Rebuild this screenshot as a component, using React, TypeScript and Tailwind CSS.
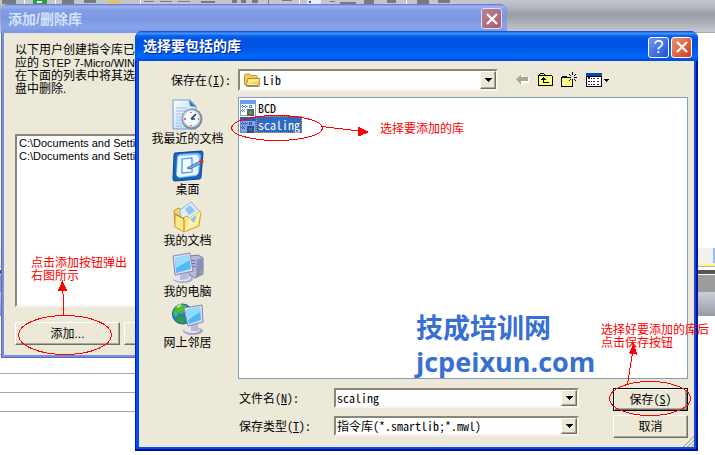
import React, { useState } from 'react';

const RAISED = 'border border-t-white border-l-white border-r-[#716f64] border-b-[#716f64] shadow-[inset_-1px_-1px_0_#aca899]';
const SUNKEN = 'border-2 border-t-[#8a8779] border-l-[#8a8779] border-r-[#f6f4ec] border-b-[#f6f4ec] bg-white';

const DownArrow = () => (
  <svg width="7" height="4" viewBox="0 0 7 4" shapeRendering="crispEdges">
    <path d="M0 0h7v1H6v1H5v1H4v1H3V3H2V2H1V1H0z" fill="#000" />
  </svg>
);

const RecentIcon = () => (
  <svg width="32" height="32" viewBox="0 0 32 32">
    <defs>
      <linearGradient id="paper" x1="0" y1="0" x2="1" y2="1">
        <stop offset="0" stopColor="#fff" />
        <stop offset="1" stopColor="#a9cdf8" />
      </linearGradient>
    </defs>
    <path d="M1 1h17l6 6v23H1z" fill="url(#paper)" stroke="#6f9fdb" />
    <path d="M17 1l7 7-6-1z" fill="#2878c4" />
    <path d="M4 9h11M4 12h15M4 15h9M4 18h6M4 21h5M4 24h5M4 27h6" stroke="#9dc2ee" />
    <circle cx="20" cy="20" r="10.5" fill="#7e8da0" />
    <circle cx="19.500" cy="19.500" r="9" fill="#c8d3df" />
    <circle cx="19.500" cy="19.500" r="7.500" fill="#f4fbff" />
    <path d="M19 20l5-5M19 20l4 0" stroke="#124a7b" strokeWidth="1.700" />
    <path d="M19 13v1M19 26v1M12 20h2M26 20h1" stroke="#ef6844" strokeWidth="2" />
  </svg>
);

const DesktopIcon = () => (
  <svg width="32" height="32" viewBox="0 0 32 32">
    <path d="M3 3l26-2q2 0 2 2l-2 24q0 2-2 2L3 31q-2 0-2-2L2 5q0-2 1-2z" fill="#1764bd" stroke="#0c4793" />
    <path d="M5 6l3-2 18-1 3 2-2 18-3 3-17 2-3-3z" fill="#7cc1fb" />
    <path d="M8 6l15-1q4 0 4 4l-1 13q0 3-3 3L8 27q-4 0-3-4L6 9q0-3 2-3z" fill="#eef8ff" />
    <path d="M10 9l10-1v14l-10 1z" fill="#f4faff" stroke="#3c95e8" strokeWidth="1.200" />
    <path d="M15 18l13-7 2 2-12 6z" fill="#74b8ee" stroke="#174e88" strokeWidth=".7" />
    <circle cx="29.500" cy="11.500" r="2" fill="#cf3426" />
  </svg>
);

const DocumentsIcon = () => (
  <svg width="32" height="32" viewBox="0 0 32 32">
    <path d="M2 10l4-3 5 2 3 3v16l-11-4z" fill="#f8d768" stroke="#c3922d" />
    <path d="M8 9L19 1l9 10-9 14-10-2z" fill="#dceeff" stroke="#86b9e7" />
    <path d="M13 8l5-4 5 6-6 4z" fill="#91c4f5" />
    <path d="M3 13l8 4 4-2 2 2 12-7-2 15-15 6-9-5z" fill="#ffe785" stroke="#d49b2c" />
    <path d="M17 17l12-7-4 13-12 7z" fill="#fff1ac" />
    <path d="M18 18l7-4-3 8z" fill="#8ac3f4" />
    <path d="M3 13l9 5v12" fill="none" stroke="#b07b20" />
  </svg>
);

const ComputerIcon = () => (
  <svg width="32" height="32" viewBox="0 0 32 32">
    <path d="M18 4l8-1 5 3v16l-8 4-6-3z" fill="#b9badb" stroke="#7678a4" />
    <path d="M25 7l6-1v16l-7 3z" fill="#8c8eb9" />
    <path d="M19 8l5 1M19 11l5 1M19 14l5 1" stroke="#666a9f" />
    <path d="M28 19h2v2h-2z" fill="#72d348" />
    <ellipse cx="11" cy="27" rx="10" ry="4" fill="#a5a6c7" />
    <ellipse cx="10" cy="26" rx="9" ry="3.500" fill="#e4e5f3" />
    <path d="M8 19h8l1 8-9 1z" fill="#b9bad8" />
    <path d="M1 4l17-3 3 18-18 4z" fill="#dedff0" stroke="#8587af" />
    <path d="M3 6l14-3 2 14-15 4z" fill="#53b9f6" />
    <path d="M3 6l14-3 1 5L4 16z" fill="#a9e5ff" opacity=".8" />
  </svg>
);

const NetworkIcon = () => (
  <svg width="32" height="32" viewBox="0 0 32 32">
    <circle cx="10.500" cy="11" r="10" fill="#1681df" stroke="#075aa9" />
    <path d="M3 5l4-4 6 1 3 3-4 2-1 4-4-1-3 4-3-3z" fill="#55bb38" />
    <path d="M6 13l5 1 3 3-5 4-5-4z" fill="#3a9d29" />
    <path d="M5 4l4-2" stroke="#c6f389" strokeWidth="2" />
    <g transform="translate(11 2)">
      <ellipse cx="10" cy="26" rx="10" ry="4" fill="#a5a6c7" />
      <ellipse cx="9" cy="25" rx="8" ry="3" fill="#e4e5f3" />
      <path d="M8 18h7l1 8H8z" fill="#b9bad8" />
      <path d="M1 3l18-3 1 17-15 4z" fill="#dedff0" stroke="#8587af" />
      <path d="M3 5l14-3 1 13-12 4z" fill="#50b8f6" />
      <path d="M3 5l14-3v5L5 15z" fill="#9fe2ff" opacity=".8" />
    </g>
  </svg>
);

const LibraryIcon: React.FC<{ selected: boolean }> = ({ selected }) => (
  <svg width="16" height="16" viewBox="0 0 16 16" shapeRendering="crispEdges">
    <path d="M0 0h16v16H0z" fill={selected ? '#5f86cc' : '#8fa3c4'} />
    <path d="M0 0h16v4H0z" fill={selected ? '#2f5fb4' : '#6f9ce6'} />
    <path d="M1 4h14v11H1z" fill={selected ? '#84a8e4' : '#fff'} />
    <path
      d="M1 6h1v1H1zM2 5h1v1H2zM2 7h1v1H2zM3 6h2v1H3zM5 5h1v1H5zM5 7h1v1H5zM6 6h2v1H6zM9 5h3v1H9zM9 7h3v1H9zM9 6h1v1H9zM11 6h1v1h-1zM1 10h1v1H1zM2 9h1v1H2zM2 11h1v1H2zM3 10h1v1H3zM4 9h1v1H4zM4 11h1v1H4z"
      fill={selected ? '#2b5cb5' : '#5c8edc'}
    />
    <path d="M7 9h7v7H7z" fill={selected ? '#2d4f80' : '#5b6b62'} />
    <path d="M9 11h3v3H9z" fill={selected ? '#47797d' : '#5f9a56'} />
  </svg>
);

const FolderIcon = () => (
  <svg width="17" height="14" viewBox="0 0 17 14">
    <path d="M2 13h13l1-7v6l-1 2H3z" fill="#8d8a78" />
    <path d="M.5 11V3l1-2h4l2 1.500h5l1 1.500v7l-1 1.500H1.500z" fill="#f0cb52" stroke="#c09a2c" />
    <path d="M2 12.500l2-7h12l-2 7z" fill="#ffec97" stroke="#b78b1d" />
    <path d="M4 11h9l1-3z" fill="#f2cd54" />
  </svg>
);

const BackIcon = () => (
  <svg width="14" height="12" viewBox="0 0 14 12" shapeRendering="crispEdges">
    <path d="M1 6l6-5v3h6v5H7v3z" fill="#fff" />
    <path d="M0 5l5-5v3h7v4H5v4z" fill="#aca899" />
  </svg>
);

const UpIcon = () => (
  <svg width="15" height="14" viewBox="0 0 15 14" shapeRendering="crispEdges">
    <path d="M0 2h1V1h1V0h4v1h1v1h7v1h1v10H0z" fill="#000" />
    <path d="M1 3h13v9H1zM2 1h4v1H2z" fill="#ffff80" />
    <path d="M5 4h1v1h1v1h1v1H6v2h5v1H5V7H3V6h1V5h1z" fill="#000" />
  </svg>
);

const NewFolderIcon = () => (
  <svg width="17" height="16" viewBox="0 0 17 16" shapeRendering="crispEdges">
    <path d="M0 5h1V4h5v1h6v10H0z" fill="#000" />
    <path d="M1 6h10v8H1zM2 5h3v0z" fill="#ffff80" />
    <path d="M8 3h6v5H8z" fill="#ece9d8" />
    <path d="M11 0h1v3h-1zM11 7h1v3h-1zM7 5h3v1H7zM13 5h3v1h-3zM8 2h1v1H8zM9 3h1v1H9zM13 3h1v1h-1zM14 2h1v1h-1zM9 7h1v1H9zM13 7h1v1h-1zM14 8h1v1h-1zM8 8h1v1H8z" fill="#000" />
  </svg>
);

const ViewIcon = () => (
  <svg width="16" height="14" viewBox="0 0 16 14" shapeRendering="crispEdges">
    <path d="M0 0h16v14H0z" fill="#000" />
    <path d="M1 4h14v9H1z" fill="#fff" />
    <path d="M0 0h16v3H0z" fill="#0a48a5" />
    <path d="M2 5h2v1H2zM7 5h2v1H7zM11 5h2v1h-2zM2 8h2v1H2zM7 8h2v1H7zM11 8h2v1h-2zM2 11h2v1H2zM7 11h2v1H7zM11 11h2v1h-2z" fill="#2a2a8c" />
    <path d="M2 4h2v1H2zM5 5h1v1H5zM10 5h0v1zM14 5h0v1zM5 8h1v1H5zM5 11h1v1H5z" fill="#000" />
  </svg>
);

const CloseGlyph = () => (
  <svg width="12" height="12" viewBox="0 0 12 12">
    <path d="M1 1l10 10M11 1L1 11" stroke="#fff" strokeWidth="2.200" />
  </svg>
);

const places = [
  { name: '我最近的文档', icon: RecentIcon },
  { name: '桌面', icon: DesktopIcon },
  { name: '我的文档', icon: DocumentsIcon },
  { name: '我的电脑', icon: ComputerIcon },
  { name: '网上邻居', icon: NetworkIcon },
];

const libraries = ['BCD', 'scaling'];

const Backdrop = () => (
  <div className="absolute inset-0 bg-white">
    <div className="h-[33px] bg-[linear-gradient(#c3c7cf,#b0b4bc_25%,#979ca5_45%,#a7abb4_65%,#c6c8cf)] border-b border-[#aaa]">
      <svg width="490" height="4" viewBox="0 0 490 4" shapeRendering="crispEdges">
        <path d="M0 0h490v4H0z" fill="#c3c6cb" />
        <path d="M2 0h14v4H2zM62 0h12v4H62zM84 0h12v3H84zM144 1h10v1h-10zM160 1h12v1h-12zM178 1h12v1h-12zM201 1h14v2h-14zM232 0h5v3h-5zM241 0h5v3h-5zM252 0h6v3h-6zM268 0h1v4h-1zM282 0h10v1h-10zM330 1h5v1h-5zM340 2h16v2h-16zM364 0h10v4h-10zM387 0h9v3h-9zM417 0h12v4h-12zM438 0h12v3h-12z" fill="#777b80" />
        <path d="M24 0h1v4h-1zM55 0h1v4h-1zM140 0h1v4h-1zM299 0h1v4h-1zM406 0h1v4h-1z" fill="#fff" />
        <path d="M33 0h14v4H33z" fill="#2f9d45" />
        <path d="M37 1h5v2h-5z" fill="#fff" />
        <path d="M107 1h14v3h-14z" fill="#e8bd6c" />
        <path d="M307 0h14v4h-14z" fill="#e5efff" />
        <path d="M309 1h2v2h-2z" fill="#2856a8" />
      </svg>
    </div>
    <div className="mt-[215px] h-4 bg-[#f3f1eb] flex justify-end">
      <div className="w-0.5 h-[15px] bg-[#9fbcf0]" />
    </div>
    <div className="h-[3px] bg-[#fff58a] border-b border-[#b9b9a5]" />
    <div className="mt-[3px] h-1 bg-[#555]" />
    <div className="h-[18px] bg-[#9b9d9b] border-t border-white" />
    <div className="h-6 bg-linear-to-b from-[#cdd0d7] to-[#969ba6]" />
    <div className="mt-[38px] w-1 h-px bg-[#aca899]" />
    <div className="mt-[18px] h-[39px] w-[135px] flex flex-col justify-between">
      <div className="h-px bg-[#aca899]" />
      <div className="h-px bg-[#aca899]" />
      <div className="h-px bg-[#aca899]" />
    </div>
  </div>
);

const LibraryWindow = () => (
  <section className="absolute top-1 left-px right-[208px] rounded-t-lg overflow-hidden bg-[#7a8fe0] pl-[3px] pr-1 pb-[3px] shadow-[inset_0_0_0_1px_#5f69ca]">
    <header className="-ml-[3px] -mr-1 h-[29px] pl-[7px] pr-[5px] flex items-center justify-between bg-[linear-gradient(#6374cf,#9db2f2_8%,#839fe6_20%,#7b96df_50%,#86a3ec_80%,#7d96e3)]">
      <h2 className="text-sm font-bold text-[#d8e2fa]">添加/删除库</h2>
      <button type="button" aria-label="关闭" className="size-[21px] flex items-center justify-center rounded-[3px] border border-[#dbe0fa] bg-linear-to-br from-[#ba818f] to-[#ac5c70]">
        <CloseGlyph />
      </button>
    </header>
    <div className="bg-[#ece9d8] px-[11px] pt-[11px] pb-[10px]">
      <p className="leading-[13px] whitespace-nowrap">
        以下用户创建指令库已<br />
        应的 <span className="text-[11px]">STEP 7-Micro/WIN</span><br />
        在下面的列表中将其选<br />
        盘中删除.
      </p>
      <ul className={`mt-[38px] h-[173px] pl-0.5 pt-px text-[11px] leading-[13px] ${SUNKEN}`}>
        <li>C:\Documents and Settings</li>
        <li>C:\Documents and Settings</li>
      </ul>
      <div className="mt-[15px] flex gap-1">
        <button type="button" className={`w-[105px] h-[23px] bg-[#ece9d8] ${RAISED}`}>添加...</button>
        <button type="button" aria-label="删除" className={`w-[105px] h-[23px] bg-[#ece9d8] ${RAISED}`} />
      </div>
    </div>
  </section>
);

const SaveDialog = () => {
  const [selected, setSelected] = useState('scaling');
  const [fileName, setFileName] = useState('scaling');

  const pick = (name: string) => {
    setSelected(name);
    setFileName(name);
  };

  return (
    <section className="absolute top-[31px] left-[135px] right-[17px] rounded-t-lg overflow-hidden bg-[#0a4bec] px-1 pb-1 shadow-[inset_-2px_-2px_0_#00138c,inset_1px_0_0_#0019cf]">
      <header className="-mx-1 h-[30px] pl-2 pr-[6px] flex items-center bg-[linear-gradient(#0a45c8,#3f97ff_8%,#0a60ee_16%,#0053e1_30%,#0055e5_55%,#0068ff_85%,#0049d4)]">
        <h1 className="flex-1 text-sm font-bold text-white [text-shadow:1px_1px_0_#00248c]">选择要包括的库</h1>
        <div className="flex gap-0.5 pt-0.5">
          <button type="button" aria-label="帮助" className="size-[21px] flex items-center justify-center rounded-[3px] border border-white bg-linear-to-br from-[#6d98f2] to-[#1c4fd8] text-white text-lg leading-none">
            ?
          </button>
          <button type="button" aria-label="关闭" className="size-[21px] flex items-center justify-center rounded-[3px] border border-white bg-linear-to-br from-[#ef8f72] to-[#cf3a12]">
            <CloseGlyph />
          </button>
        </div>
      </header>

      <div className="relative bg-[#ece9d8] pt-2 pb-[9px] pr-[6px] font-['Noto_Sans_Mono_CJK_SC','Noto_Sans_CJK_SC',monospace]">
        <div className="flex items-center">
          <label htmlFor="folder" className="w-[99px] pl-8 shrink-0 whitespace-nowrap">保存在(<u>I</u>):</label>
          <div className={`relative w-[260px] h-[22px] flex items-center ${SUNKEN}`}>
            <span className="absolute left-1 pointer-events-none"><FolderIcon /></span>
            <select id="folder" className="w-full h-full pl-[23px] appearance-none outline-none">
              <option>Lib</option>
            </select>
            <span className={`absolute right-0 inset-y-0 w-4 flex items-center justify-center bg-[#ece9d8] pointer-events-none ${RAISED}`}><DownArrow /></span>
          </div>
          <div className="ml-[18px] flex items-center gap-2">
            <button type="button" aria-label="后退"><BackIcon /></button>
            <button type="button" aria-label="向上一级"><UpIcon /></button>
            <button type="button" aria-label="新建文件夹"><NewFolderIcon /></button>
            <button type="button" aria-label="查看" className="flex items-center gap-0.5">
              <ViewIcon />
              <svg width="5" height="3" viewBox="0 0 5 3" shapeRendering="crispEdges"><path d="M0 0h5v1H4v1H3v1H2V2H1V1H0z" /></svg>
            </button>
          </div>
        </div>

        <div className="mt-[6px] flex">
          <nav className="w-[99px] shrink-0 pt-0.5 pr-0.5 flex flex-col">
            {places.map(({ name, icon: Icon }) => (
              <button key={name} type="button" className="h-[51px] flex flex-col items-center whitespace-nowrap">
                <Icon />
                <span className="leading-[14px]">{name}</span>
              </button>
            ))}
          </nav>

          <div className="flex-1 min-w-0">
            <div className="relative h-[282px] border border-[#7f9db9] bg-white p-px">
              {libraries.map(name => (
                <button key={name} type="button" onClick={() => pick(name)} className="flex items-center h-[17px]">
                  <LibraryIcon selected={selected === name} />
                  <span className={`h-[17px] leading-[15px] px-px border ${selected === name ? 'bg-[#316ac5] text-white border-dotted border-[#e0953a]' : 'border-transparent'}`}>
                    {name}
                  </span>
                </button>
              ))}
              <div className="absolute left-[177px] top-[213px] text-[27px] leading-[34px] font-bold text-[#386fd2] whitespace-nowrap font-['Open_Sans','Noto_Sans_CJK_SC',sans-serif]">
                <p>技成培训网</p>
                <p>jcpeixun.com</p>
              </div>
            </div>

            <div className="mt-[9px] flex gap-[34px]">
              <div className="flex-1 min-w-0 flex flex-col gap-2">
                <div className="flex items-center">
                  <label htmlFor="filename" className="w-24 pl-px shrink-0">文件名(<u>N</u>):</label>
                  <div className={`flex-1 min-w-0 h-5 flex ${SUNKEN}`}>
                    <input id="filename" value={fileName} onChange={e => setFileName(e.target.value)} className="flex-1 min-w-0 px-px outline-none" />
                    <button type="button" aria-label="展开" className={`w-4 flex items-center justify-center bg-[#ece9d8] ${RAISED}`}><DownArrow /></button>
                  </div>
                </div>
                <div className="flex items-center">
                  <label htmlFor="filetype" className="w-24 pl-px shrink-0">保存类型(<u>T</u>):</label>
                  <div className={`relative flex-1 min-w-0 h-5 ${SUNKEN}`}>
                    <select id="filetype" className="block w-full h-full pl-px appearance-none outline-none">
                      <option>指令库(*.smartlib;*.mwl)</option>
                    </select>
                    <span className={`absolute right-0 inset-y-0 w-4 flex items-center justify-center bg-[#ece9d8] pointer-events-none ${RAISED}`}><DownArrow /></span>
                  </div>
                </div>
              </div>
              <div className="w-[75px] flex flex-col gap-1">
                <button type="button" className="h-[23px] leading-4 pb-0.5 border border-black bg-[#ece9d8] shadow-[inset_1px_1px_0_#fff,inset_-1px_-1px_0_#716f64,inset_-2px_-2px_0_#aca899]">保存(<u>S</u>)</button>
                <button type="button" className={`h-[23px] leading-4 pb-0.5 bg-[#ece9d8] ${RAISED}`}>取消</button>
              </div>
            </div>
          </div>
        </div>

        <svg className="absolute right-0 bottom-0" width="12" height="12" viewBox="0 0 12 12">
          <path d="M1 12L12 1M5 12l7-7M9 12l3-3" stroke="#aca899" strokeWidth="1.500" />
          <path d="M0 12L12 0M4 12l8-8M8 12l4-4" stroke="#fff" strokeWidth=".7" />
        </svg>
      </div>
    </section>
  );
};

const Annotations = () => (
  <div className="absolute inset-0 pointer-events-none text-[#f00] leading-[13px] whitespace-nowrap">
    <svg className="absolute top-0 left-0" width="715" height="455" viewBox="0 0 715 455" fill="none" stroke="#f00" strokeWidth="1" shapeRendering="crispEdges">
      <ellipse cx="277" cy="128" rx="45.500" ry="12.500" />
      <path d="M322 126.500l37 4.500" />
      <path d="M358 127v9l10-4z" fill="#f00" />
      <ellipse cx="65" cy="335" rx="46.500" ry="19.500" />
      <path d="M63.500 315v-16l-1-10" />
      <path d="M58.500 290.500h8l-4-9z" fill="#f00" />
      <ellipse cx="650" cy="398.500" rx="40.500" ry="17" />
      <path d="M627.500 384l5-31" />
      <path d="M629.500 353l7 1-3-9z" fill="#f00" />
    </svg>
    <p className="absolute left-[380px] top-[123px]">选择要添加的库</p>
    <p className="absolute left-[31px] top-[257px]">点击添加按钮弹出<br />右图所示</p>
    <p className="absolute left-[601px] top-[324px]">选择好要添加的库后<br />点击保存按钮</p>
  </div>
);

const App: React.FC = () => (
  <main className="relative min-h-screen overflow-hidden text-xs text-black font-['Liberation_Sans','Noto_Sans_CJK_SC',sans-serif]">
    <Backdrop />
    <LibraryWindow />
    <SaveDialog />
    <Annotations />
  </main>
);

export default App;
